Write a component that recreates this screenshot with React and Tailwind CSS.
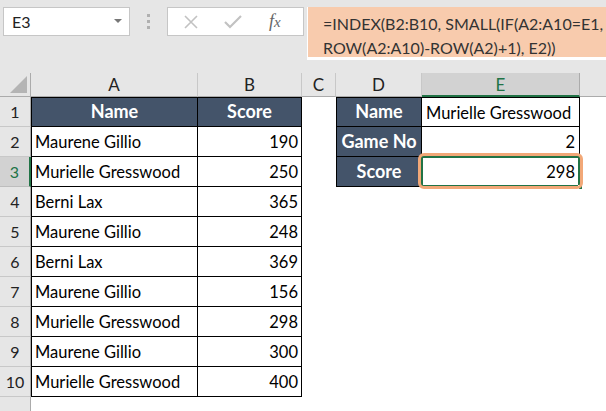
import React from 'react'

const font = { fontFamily: 'Lato, "Open Sans", sans-serif' }

const rows = [
  ['Maurene Gillio', 190],
  ['Murielle Gresswood', 250],
  ['Berni Lax', 365],
  ['Maurene Gillio', 248],
  ['Berni Lax', 369],
  ['Maurene Gillio', 156],
  ['Murielle Gresswood', 298],
  ['Maurene Gillio', 300],
  ['Murielle Gresswood', 400],
]

const RowHead = ({ n, active }) => (
  <div
    className={
      'w-[31px] shrink-0 flex items-end justify-center pb-[2px] text-[16px] border-b ' +
      (active
        ? 'bg-[#d2d2d2] text-[#217346] border-b-[#bdbdbd] border-r-2 border-r-[#217346]'
        : 'bg-[#e6e6e6] text-[#222] border-b-[#c8c8c8] border-r border-r-[#ababab]')
    }
  >
    {n}
  </div>
)

const head = 'bg-[#44546a] text-white font-bold text-[18px] flex items-end justify-center pb-[1px]'

const App = () => {
  return (
    <div className='w-[606px] h-[411px] overflow-hidden bg-white' style={font}>
      {/* top bar */}
      <div className='h-[73px] bg-[#e6e6e6] flex items-start pt-[7px]'>
        <div className='ml-[3px] w-[127px] h-[29px] bg-white border border-[#c6c6c6] flex items-center justify-between pl-[8px] pr-[7px]'>
          <span className='text-[16px] text-[#222]'>E3</span>
          <svg width='8' height='5' viewBox='0 0 8 5'><path d='M0 0h8L4 4z' fill='#777' /></svg>
        </div>
        <div className='w-[37px] h-[29px] flex flex-col items-center justify-center gap-[3px]'>
          <div className='w-[3px] h-[3px] bg-[#b0b0b0]' />
          <div className='w-[3px] h-[3px] bg-[#b0b0b0]' />
          <div className='w-[3px] h-[3px] bg-[#b0b0b0]' />
        </div>
        <div className='w-[137px] h-[29px] bg-white border border-[#c6c6c6] flex items-center'>
          <svg className='ml-[15px]' width='16' height='16' viewBox='0 0 16 16'>
            <path d='M2 2l12 12M14 2L2 14' stroke='#c2c2c2' strokeWidth='1.6' />
          </svg>
          <svg className='ml-[25px]' width='18' height='16' viewBox='0 0 18 16'>
            <path d='M1 8l5 5L17 2' stroke='#c2c2c2' strokeWidth='2.2' fill='none' />
          </svg>
          <span className='ml-[27px] text-[18px] italic text-[#666]' style={{ fontFamily: '"Liberation Serif", serif' }}>
            f<span className='text-[15px]'>x</span>
          </span>
        </div>
        <div className='ml-[3px] flex-1 h-[53px] bg-white overflow-hidden'>
          <div className='h-[50px] ml-[1px] bg-[#f8cbad] pl-[15px] pt-[5px] text-[16px] leading-[24px] text-[#333] whitespace-nowrap'>
            <div>=INDEX(B2:B10, SMALL(IF(A2:A10=E1,</div>
            <div>ROW(A2:A10)-ROW(A2)+1), E2))</div>
          </div>
        </div>
      </div>

      {/* column headers */}
      <div className='flex h-[24px] bg-[#e6e6e6] text-[17px] text-[#222]'>
        <div className='w-[31px] shrink-0 border-r border-b border-[#ababab] relative'>
          <svg className='absolute left-[10px] top-[3px]' width='17' height='17' viewBox='0 0 17 17'>
            <path d='M17 0V17H0z' fill='#b4b4b4' />
          </svg>
        </div>
        <div className='w-[167px] border-r border-[#c8c8c8] border-b border-b-[#ababab] flex items-center justify-center pt-[1px]'>A</div>
        <div className='w-[104px] border-r border-[#c8c8c8] border-b border-b-[#ababab] flex items-center justify-center pt-[1px]'>B</div>
        <div className='w-[34px] border-r border-[#c8c8c8] border-b border-b-[#ababab] flex items-center justify-center pt-[1px]'>C</div>
        <div className='w-[86px] border-r border-[#c8c8c8] border-b border-b-[#ababab] flex items-center justify-center pt-[1px]'>D</div>
        <div className='w-[158px] bg-[#d2d2d2] border-r border-[#ababab] border-b-2 border-b-[#217346] text-[#217346] flex items-center justify-center pt-[2px]'>E</div>
        <div className='flex-1 border-b border-b-[#ababab]' />
      </div>

      {/* header row 1 */}
      <div className='flex h-[30px] text-[16.5px]'>
        <RowHead n={1} />
        <div className={'w-[167px] border border-black ' + head}>Name</div>
        <div className={'w-[104px] border-y border-r border-black ' + head}>Score</div>
        <div className='w-[34px]' />
        <div className={'w-[86px] border border-black ' + head}>Name</div>
        <div className='w-[158px] border-y border-r border-black flex items-end pl-[4px] pb-0 text-black'>Murielle Gresswood</div>
      </div>

      {rows.map(([name, score], i) => {
        const r = i + 2
        let right = <div className='w-[244px]' />
        if (r === 2) {
          right = (
            <>
              <div className={'w-[86px] border-x border-b border-black ' + head}>Game No</div>
              <div className='w-[158px] border-r border-b border-black flex items-end justify-end pr-[4px] pb-[1px] text-black'>2</div>
            </>
          )
        }
        if (r === 3) {
          right = (
            <>
              <div className={'w-[86px] border-x border-b border-black ' + head}>Score</div>
              <div className='w-[158px] relative z-10 border-r border-b border-black flex items-end justify-end pr-[4px] pb-[1px] text-black'>
                <div className='absolute inset-[-1px] border-2 border-[#217346]' />
                <div className='absolute right-[-4px] bottom-[-4px] w-[5px] h-[5px] bg-[#217346] border border-white' />
                <div className='absolute -left-[4px] -right-[4px] -top-[4px] -bottom-[3px] border-[3px] border-solid border-[#f2a878] rounded-[6px]' />
                <span className='relative'>298</span>
              </div>
            </>
          )
        }
        return (
          <div key={r} className='flex h-[30px] text-[16.5px] text-black'>
            <RowHead n={r} active={r === 3} />
            <div className='w-[167px] border-x border-b border-black flex items-end pl-[3px] pb-[1px]'>{name}</div>
            <div className='w-[104px] border-r border-b border-black flex items-end justify-end pr-[3px] pb-[1px]'>{score}</div>
            <div className='w-[34px]' />
            {right}
          </div>
        )
      })}

      <div className='flex h-[14px]'>
        <div className='w-[31px] bg-[#e6e6e6] border-r border-[#ababab]' />
      </div>
    </div>
  )
}

export default App
